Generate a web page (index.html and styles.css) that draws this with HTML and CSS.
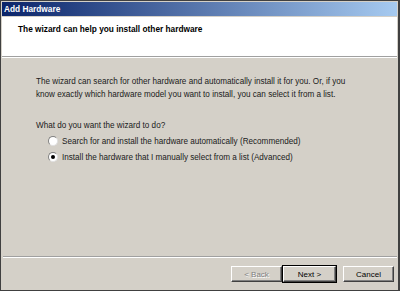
FILE: index.html
```html
<!DOCTYPE html>
<html lang="en">
<head>
  <meta charset="UTF-8" />
  <title>Add Hardware</title>
  <link rel="stylesheet" href="styles.css">
</head>
<body>

  <div class="window">
    <div class="titlebar">Add Hardware</div>

    <header class="wizard-head">
      <div class="head-title">The wizard can help you install other hardware</div>
    </header>

    <section class="wizard-body">
      <p class="intro">
        The wizard can search for other hardware and automatically install it for you. Or, if you<br>
        know exactly which hardware model you want to install, you can select it from a list.
      </p>

      <p class="question">What do you want the wizard to do?</p>

      <label class="option">
        <span class="radio"></span>
        Search for and install the hardware automatically (Recommended)
      </label>
      <label class="option">
        <span class="radio checked"></span>
        Install the hardware that I manually select from a list (Advanced)
      </label>
    </section>

    <div class="divider"></div>

    <footer class="buttons">
      <button class="btn disabled">&lt; Back</button>
      <button class="btn default">Next &gt;</button>
      <button class="btn cancel">Cancel</button>
    </footer>
  </div>

</body>
</html>
```

FILE: styles.css
```css
body {
  margin: 0;
  background: #404040;
  font-family: "Liberation Sans", Arial, sans-serif;
  font-size: 8.15px;
  color: #000;
}

.window {
  width: 400px;
  height: 291px;
  box-sizing: border-box;
  border-top: 1px solid #404040;
  border-left: 1px solid #404040;
  border-right: 2px solid #404040;
  border-bottom: 1px solid #404040;
  padding: 1px;
  background: #d4d0c8;
  display: flex;
  flex-direction: column;
}

.titlebar {
  height: 14px;
  line-height: 14px;
  padding-left: 2px;
  color: #fff;
  font-weight: bold;
  font-size: 8.3px;
  background: linear-gradient(to right, #0a246a, #a6caf0);
}

.wizard-head {
  height: 39px;
  background: #fff;
  border-bottom: 1px solid #a0a0a0;
  box-shadow: 0 1px 0 #fff;
  padding-left: 16px;
  display: flex;
  align-items: center;
  margin-top: 1px;
}

.head-title {
  font-weight: bold;
  font-size: 8.3px;
  margin-top: -15px;
}

.wizard-body {
  flex: 1;
  padding: 18px 0 0 34px;
}

.intro {
  margin: 0;
  line-height: 13px;
  color: #202020;
}

.question {
  margin: 20px 0 3px;
  color: #202020;
}

.option {
  display: flex;
  align-items: center;
  gap: 4px;
  margin-left: 12px;
  height: 16px;
  color: #202020;
}

.radio {
  width: 8px;
  height: 8px;
  border-radius: 50%;
  background: #fff;
  border: 1px solid #808080;
  border-right-color: #e0e0e0;
  border-bottom-color: #e0e0e0;
  position: relative;
}

.radio.checked::after {
  content: "";
  position: absolute;
  left: 2px;
  top: 2px;
  width: 4px;
  height: 4px;
  border-radius: 50%;
  background: #000;
}

.divider {
  height: 1px;
  background: #a0a0a0;
  border-bottom: 1px solid #fff;
  margin-left: 1px;
}

.buttons {
  height: 31px;
  display: flex;
  justify-content: flex-end;
  align-items: flex-start;
  padding: 8px 3px 0 0;
  box-sizing: border-box;
}

.btn {
  width: 51px;
  height: 16px;
  padding: 0;
  font-family: inherit;
  font-size: 8px;
  background: #d4d0c8;
  border: 1px solid;
  border-color: #fff #404040 #404040 #fff;
  box-shadow: inset -1px -1px 0 #808080;
}

.btn.disabled {
  color: #808080;
  text-shadow: 1px 1px 0 #fff;
}

.btn.default {
  width: 53px;
  margin-left: 1px;
  outline: 1px solid #000;
}

.btn.cancel {
  margin-left: 7px;
}
```
